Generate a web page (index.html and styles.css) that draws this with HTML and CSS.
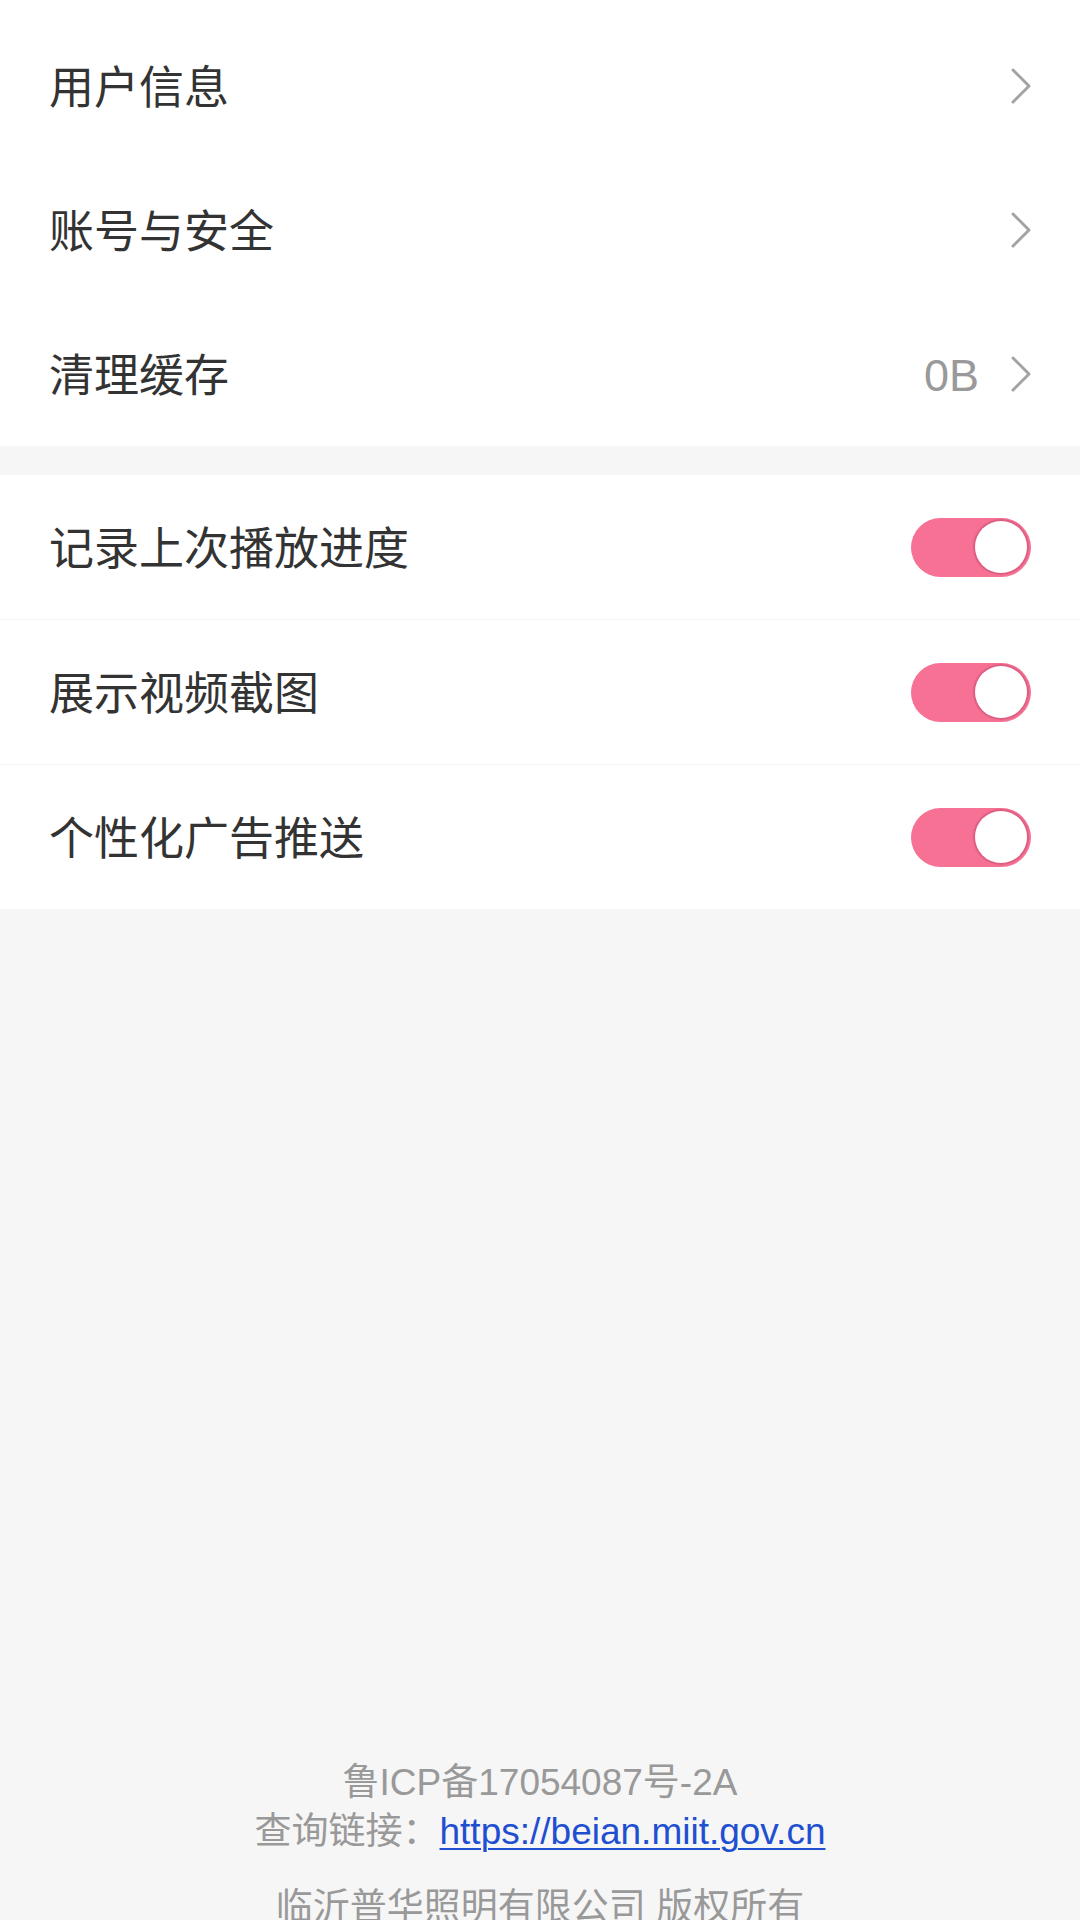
FILE: index.html
```html
<!DOCTYPE html>
<html lang="zh-CN">
<head>
<meta charset="utf-8">
<title>设置</title>
<link rel="stylesheet" href="styles.css">
</head>
<body>
<div class="page">
  <section class="group group-first">
    <div class="row">
      <span class="label">用户信息</span>
      <span class="right">
        <svg class="chev" viewBox="0 0 20 36" width="20" height="36"><polyline points="2,2 18,18 2,34"/></svg>
      </span>
    </div>
    <div class="row">
      <span class="label">账号与安全</span>
      <span class="right">
        <svg class="chev" viewBox="0 0 20 36" width="20" height="36"><polyline points="2,2 18,18 2,34"/></svg>
      </span>
    </div>
    <div class="row">
      <span class="label">清理缓存</span>
      <span class="right">
        <span class="value">0B</span>
        <svg class="chev" viewBox="0 0 20 36" width="20" height="36"><polyline points="2,2 18,18 2,34"/></svg>
      </span>
    </div>
  </section>

  <section class="group group-toggles">
    <div class="row row-line">
      <span class="label">记录上次播放进度</span>
      <span class="switch"><span class="knob"></span></span>
    </div>
    <div class="row row-line">
      <span class="label">展示视频截图</span>
      <span class="switch"><span class="knob"></span></span>
    </div>
    <div class="row">
      <span class="label">个性化广告推送</span>
      <span class="switch"><span class="knob"></span></span>
    </div>
  </section>

  <footer class="footer">
    <p class="line">鲁ICP备17054087号-2A</p>
    <p class="line">查询链接：<a class="link" href="#">https://beian.miit.gov.cn</a></p>
    <p class="line line-copy">临沂普华照明有限公司 版权所有</p>
  </footer>
</div>
</body>
</html>
```

FILE: styles.css
```css
html, body {
  margin: 0;
  padding: 0;
}

body {
  width: 1080px;
  height: 1920px;
  overflow: hidden;
  background: #f6f6f6;
  font-family: "Liberation Sans", "Noto Sans CJK SC", sans-serif;
}

.page {
  display: flex;
  flex-direction: column;
}

.group {
  background: #ffffff;
  display: flex;
  flex-direction: column;
}

.group-first {
  padding-top: 14px;
}

.group-toggles {
  margin-top: 29px;
}

.row {
  height: 144px;
  padding: 0 49px 0 49px;
  display: flex;
  align-items: center;
  justify-content: space-between;
  box-sizing: border-box;
}

.row-line {
  height: 145px;
  border-bottom: 1px solid #f3f3f3;
}

.label {
  font-size: 45px;
  color: #333333;
  line-height: 1;
  padding-top: 5px;
}

.right {
  display: flex;
  align-items: center;
}

.value {
  font-size: 45px;
  color: #999999;
  margin-right: 32px;
  line-height: 1;
  padding-top: 3px;
}

.chev {
  display: block;
  fill: none;
  stroke: #a3a3a3;
  stroke-width: 3;
  stroke-linecap: round;
  stroke-linejoin: round;
}

.switch {
  width: 120px;
  height: 59px;
  border-radius: 30px;
  background: #f67193;
  display: flex;
  align-items: center;
  justify-content: flex-end;
  padding-right: 4px;
  box-sizing: border-box;
}

.knob {
  width: 52px;
  height: 52px;
  border-radius: 50%;
  background: #ffffff;
  box-shadow: 0 0 1px 2px rgba(190, 70, 110, 0.45);
}

.footer {
  padding-top: 849px;
  text-align: center;
  color: #999999;
  font-size: 37px;
}

.line {
  margin: 0;
  line-height: 49px;
}

.line-copy {
  margin-top: 27px;
}

.link {
  color: #1f4fd1;
  text-decoration: underline;
  text-decoration-thickness: 2px;
  text-underline-offset: 4px;
}
```
